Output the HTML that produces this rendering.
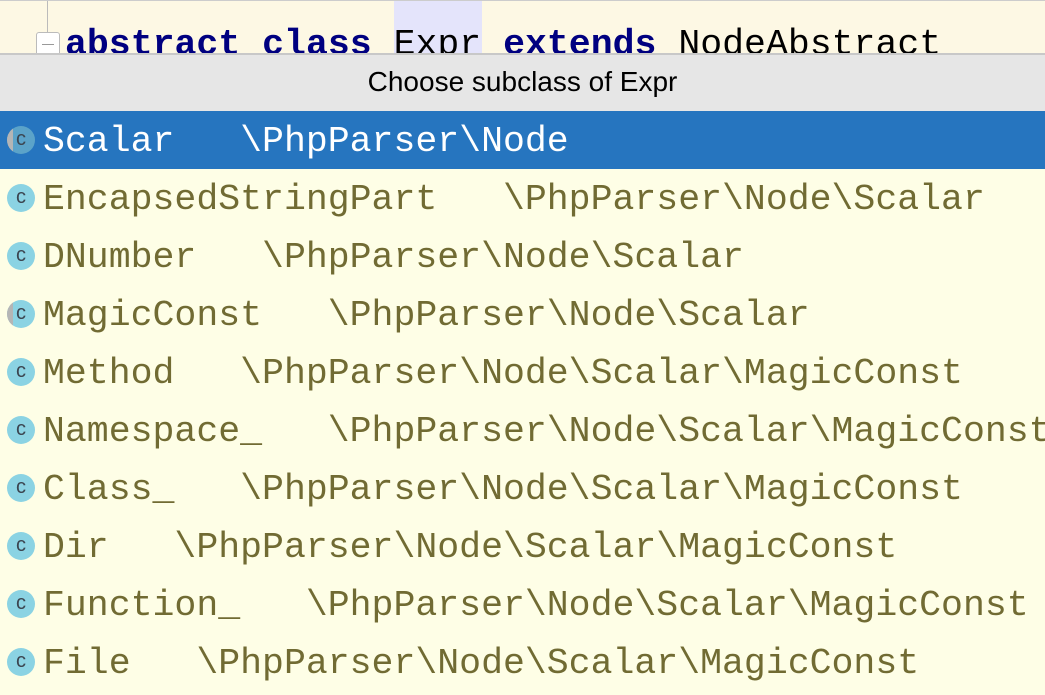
<!DOCTYPE html>
<html><head><style>
body{margin:0;width:1045px;height:689px;overflow:hidden;background:#fefee6;font-family:"Liberation Mono",monospace;}
.top{position:absolute;left:0;top:0;width:1045px;height:53px;background:#fdf8e4;overflow:hidden;border-top:1px solid #ccc;}
.code{position:absolute;left:65px;top:22px;font-size:36.5px;font-weight:bold;color:#000080;white-space:pre;line-height:44px}
.hl{position:absolute;left:394px;top:0;width:88px;height:53px;background:#e4e4fb}
.fold{position:absolute;left:36px;top:31px;width:22px;height:22px;border:1px solid #bbb;background:#fff;border-radius:3px}
.fold:after{content:"";position:absolute;left:5px;top:11px;width:12px;height:1px;background:#999}
.gl{position:absolute;left:47px;top:0;width:1px;height:31px;background:#bbb}
.hdr{position:absolute;left:0;top:53px;width:1045px;height:58px;background:#e6e6e6;border-top:2px solid #c8c8c8;box-sizing:border-box;text-align:center;font:28px "Liberation Sans",sans-serif;line-height:54px;color:#000}
.row{position:absolute;left:0;width:1045px;height:58px;font-size:36.5px;line-height:62px;color:#716b33;white-space:pre}
.row span.t{position:absolute;left:43px;top:0}
.sel{background:#2675bf;color:#fff}
.ic{position:absolute;left:7px;top:15px;width:28px;height:28px;border-radius:50%;background:#8bd3e3;overflow:hidden}
.ic:before{content:"c";position:absolute;left:0;top:0;width:28px;text-align:center;font:20px "Liberation Sans",sans-serif;color:#3b4550;line-height:26px;z-index:1}
.ab:after{content:"";position:absolute;left:0;top:0;width:6px;height:28px;background:#b5b5b5}
.sel .ic{background:#5ba3c9}
</style></head><body>
<div class="top"><div class="hl"></div><div class="gl"></div><div class="fold"></div>
<div class="code">abstract class <span style="color:#000;font-weight:normal">Expr</span> extends <span style="color:#000;font-weight:normal">NodeAbstract</span></div></div>
<div class="hdr">Choose subclass of Expr</div>
<div class="row sel" style="top:111px"><div class="ic ab"></div><span class="t">Scalar   \PhpParser\Node</span></div>
<div class="row" style="top:169px"><div class="ic"></div><span class="t">EncapsedStringPart   \PhpParser\Node\Scalar</span></div>
<div class="row" style="top:227px"><div class="ic"></div><span class="t">DNumber   \PhpParser\Node\Scalar</span></div>
<div class="row" style="top:285px"><div class="ic ab"></div><span class="t">MagicConst   \PhpParser\Node\Scalar</span></div>
<div class="row" style="top:343px"><div class="ic"></div><span class="t">Method   \PhpParser\Node\Scalar\MagicConst</span></div>
<div class="row" style="top:401px"><div class="ic"></div><span class="t">Namespace_   \PhpParser\Node\Scalar\MagicConst</span></div>
<div class="row" style="top:459px"><div class="ic"></div><span class="t">Class_   \PhpParser\Node\Scalar\MagicConst</span></div>
<div class="row" style="top:517px"><div class="ic"></div><span class="t">Dir   \PhpParser\Node\Scalar\MagicConst</span></div>
<div class="row" style="top:575px"><div class="ic"></div><span class="t">Function_   \PhpParser\Node\Scalar\MagicConst</span></div>
<div class="row" style="top:633px"><div class="ic"></div><span class="t">File   \PhpParser\Node\Scalar\MagicConst</span></div>
</body></html>
